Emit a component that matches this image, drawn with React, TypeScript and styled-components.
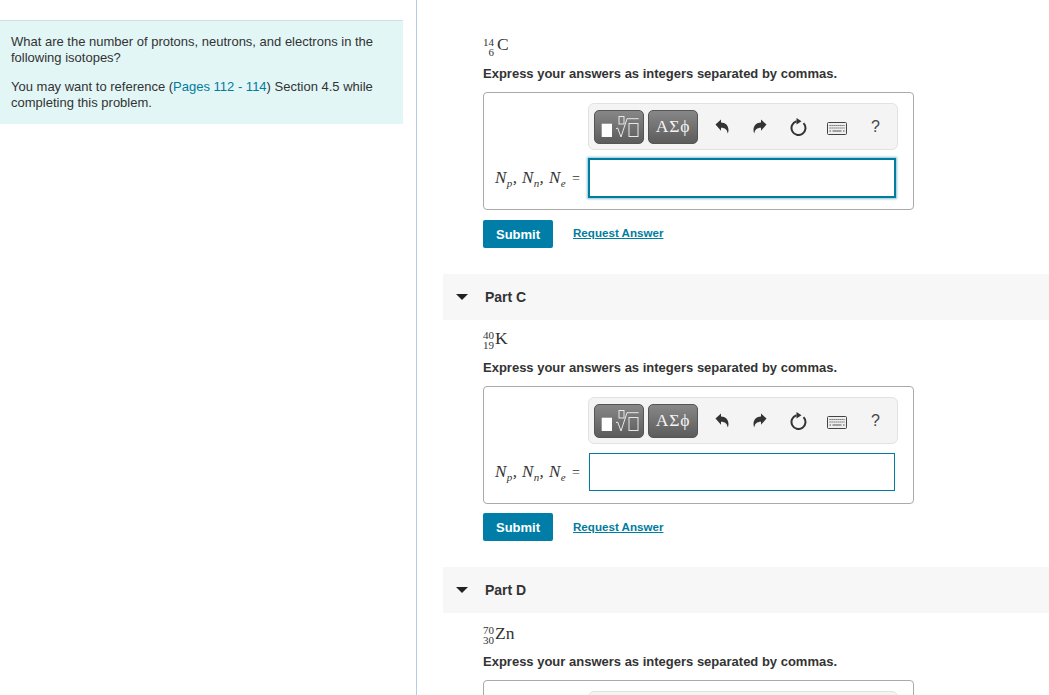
import React from "react";
import styled, { createGlobalStyle } from "styled-components";

const Global = createGlobalStyle`
  html, body { margin: 0; padding: 0; background: #fff; height: 695px; overflow: hidden; }
  body { font-family: "Liberation Sans", Arial, sans-serif; color: #333; font-size: 13px; }
  #root { height: 695px; overflow: hidden; }
`;

const Page = styled.div`
  display: flex;
  width: 1049px;
  height: 695px;
  overflow: hidden;
`;
const Left = styled.aside`
  width: 416px;
  flex: none;
  box-sizing: content-box;
  border-right: 1px solid #b5cde2;
  padding-top: 20px;
`;
const Intro = styled.div`
  width: 403px;
  height: 104px;
  box-sizing: border-box;
  background: #e2f6f6;
  border-top: 1px solid #d3dfe4;
  padding: 13px 11px 0;
  font-size: 13px;
  line-height: 16px;
  color: #333;
`;
const IntroP = styled.p`
  margin: 0 0 13px;
  width: 375px;
`;
const RefLink = styled.a`
  color: #007c9e;
`;
const Right = styled.main`
  flex: 1;
  min-width: 0;
  padding-left: 26px;
`;
const Content = styled.div`
  padding-left: 40px;
`;
const PartHeader = styled.div`
  height: 46px;
  margin-top: 26px;
  background: #f7f7f7;
  display: flex;
  align-items: center;
  font-size: 14px;
  font-weight: 700;
  color: #333;
`;
const Caret = styled.span`
  width: 0;
  height: 0;
  margin-left: 13px;
  margin-right: 17px;
  border-left: 6px solid transparent;
  border-right: 6px solid transparent;
  border-top: 6px solid #222;
`;
const Isotope = styled.div<{ $top: number }>`
  display: flex;
  align-items: center;
  height: 22px;
  margin-top: ${(p) => p.$top}px;
  font-family: "Liberation Serif", serif;
  font-size: 17.5px;
  color: #333;
`;
const Scripts = styled.span<{ $gap: number; $drop: number }>`
  display: inline-flex;
  flex-direction: column;
  align-items: flex-end;
  width: 11px;
  font-size: 11px;
  line-height: 10px;
  margin-right: ${(p) => p.$gap}px;
  margin-top: ${(p) => p.$drop}px;
`;
const Instruction = styled.div<{ $top?: number }>`
  margin-top: ${(p) => p.$top ?? 11}px;
  font-size: 13px;
  line-height: 16px;
  font-weight: 700;
  color: #333;
`;
const AnswerBox = styled.div`
  margin-top: 10px;
  width: 431px;
  height: 118px;
  box-sizing: border-box;
  border: 1px solid #aaa;
  border-radius: 4px;
  padding: 10px 15px 0 104px;
  background: #fff;
`;
const Toolbar = styled.div`
  height: 47px;
  width: 310px;
  box-sizing: border-box;
  background: #f4f4f4;
  border: 1px solid #e2e2e2;
  border-radius: 6px;
  display: flex;
  align-items: center;
  padding-left: 5px;
`;
const TemplateButton = styled.div`
  width: 50px;
  height: 34px;
  flex: none;
  box-sizing: border-box;
  margin-right: 4px;
  border-radius: 5px;
  border: 1px solid #555;
  background: linear-gradient(#878787, #5c5c5c);
  color: #f4f4f4;
  display: flex;
  align-items: center;
  justify-content: center;
  font-family: "Liberation Serif", serif;
  font-size: 17.5px;
  letter-spacing: 0.9px;
`;
const ToolIcon = styled.div`
  width: 38.3px;
  flex: none;
  display: flex;
  align-items: center;
  justify-content: center;
  color: #333;
`;
const Actions = styled.div`
  display: flex;
  align-items: center;
  margin-left: 1px;
`;
const HelpMark = styled.span`
  font-size: 16px;
  color: #444;
`;
const InputRow = styled.div`
  display: flex;
  align-items: center;
  height: 40px;
  margin-top: 8px;
  margin-left: -93px;
`;
const MathLabel = styled.div`
  width: 93px;
  flex: none;
  box-sizing: border-box;
  font-family: "Liberation Serif", serif;
  font-style: italic;
  font-size: 17px;
  letter-spacing: 0.4px;
  color: #333;
  white-space: nowrap;
`;
const Sub = styled.sub`
  font-size: 11px;
  line-height: 0;
`;
const Equals = styled.span`
  font-style: normal;
  font-size: 14px;
  margin-left: 6px;
`;
const AnswerInput = styled.div<{ $focused?: boolean }>`
  width: ${(p) => (p.$focused ? 308 : 306)}px;
  height: ${(p) => (p.$focused ? 40 : 38)}px;
  margin-left: ${(p) => (p.$focused ? 0 : 1)}px;
  box-sizing: border-box;
  background: #fff;
  border: ${(p) => (p.$focused ? 2 : 1)}px solid #007c9e;
  box-shadow: ${(p) => (p.$focused ? "0 0 2px 1px rgba(0,124,158,.45)" : "none")};
`;
const SubmitRow = styled.div<{ $top: number }>`
  display: flex;
  align-items: center;
  margin-top: ${(p) => p.$top}px;
  height: 28px;
`;
const SubmitButton = styled.button`
  width: 70px;
  height: 28px;
  padding: 0;
  border: 0;
  border-radius: 2px;
  background: #007ea8;
  color: #fff;
  font-family: "Liberation Sans", Arial, sans-serif;
  font-size: 13px;
  font-weight: 700;
`;
const RequestLink = styled.a<{ $lift: number }>`
  margin-left: 20px;
  margin-top: -${(p) => p.$lift}px;
  color: #007c9e;
  font-size: 11.6px;
  font-weight: 700;
  text-decoration: underline;
`;

const TemplateIcon = () => (
  <svg width="40" height="26" viewBox="0 0 40 26" fill="none">
    <rect x="2.700" y="9.700" width="10.300" height="13.300" fill="#fff" />
    <rect x="20" y="2.500" width="5" height="7.500" stroke="#e8e8e8" strokeWidth="1" />
    <path d="M17 14.700l1.700-.7 3.300 9L28 4.700h11.700" stroke="#e8e8e8" strokeWidth="1" />
    <rect x="30" y="9.500" width="9" height="13" stroke="#e8e8e8" strokeWidth="1" />
  </svg>
);
const Undo = () => (
  <svg width="14" height="15" viewBox="0 0 14 15" fill="#333">
    <path d="M0.500 5.500 6 0.500v3c4.500 0 7.500 3 7.500 7.500 0 1.400-.3 2.600-.8 3.500-.4-3.600-2.600-5.700-6.700-5.700v3z" />
  </svg>
);
const Redo = () => (
  <svg width="14" height="15" viewBox="0 0 14 15" fill="#333">
    <path d="M13.500 5.500 8 0.500v3C3.500 3.500.5 6.500.5 11c0 1.400.3 2.600.8 3.500C1.700 10.900 3.900 8.800 8 8.800v3z" />
  </svg>
);
const Reset = () => (
  <svg width="17" height="18" viewBox="0 0 17 18" fill="none">
    <path d="M13.500 5.100A7 7 0 1 1 6.500 3.300" stroke="#333" strokeWidth="2" />
    <path d="M6.500 0 11.500 3.300 6.500 6.600z" fill="#333" />
  </svg>
);
const Keyboard = () => (
  <svg width="20" height="16" viewBox="0 0 20 16" fill="none">
    <rect x="0.500" y="3.500" width="19" height="12" rx="1" fill="#eee" stroke="#444" />
    <path d="M2.500 6.500h15M2.500 9h15" stroke="#555" strokeWidth="1.200" strokeDasharray="1.200 0.800" />
    <path d="M2.500 12h1.500M5.500 12h9M16 12h1.500" stroke="#555" strokeWidth="1.200" />
  </svg>
);

const Answer = ({ focused, submitTop, lift }: { focused?: boolean; submitTop: number; lift: number }) => (
  <>
    <AnswerBox>
      <Toolbar>
        <TemplateButton><TemplateIcon /></TemplateButton>
        <TemplateButton>ΑΣϕ</TemplateButton>
        <Actions>
          <ToolIcon><Undo /></ToolIcon>
          <ToolIcon><Redo /></ToolIcon>
          <ToolIcon><Reset /></ToolIcon>
          <ToolIcon><Keyboard /></ToolIcon>
          <ToolIcon><HelpMark>?</HelpMark></ToolIcon>
        </Actions>
      </Toolbar>
      <InputRow>
        <MathLabel>
          N<Sub>p</Sub>, N<Sub>n</Sub>, N<Sub>e</Sub><Equals>=</Equals>
        </MathLabel>
        <AnswerInput $focused={focused} />
      </InputRow>
    </AnswerBox>
    <SubmitRow $top={submitTop}>
      <SubmitButton>Submit</SubmitButton>
      <RequestLink href="#" $lift={lift}>Request Answer</RequestLink>
    </SubmitRow>
  </>
);

const Iso = ({ a, z, s, top, gap, drop }: { a: string; z: string; s: string; top: number; gap: number; drop: number }) => (
  <Isotope $top={top}>
    <Scripts $gap={gap} $drop={drop}><span>{a}</span><span>{z}</span></Scripts>
    {s}
  </Isotope>
);

export default function App() {
  return (
    <Page>
      <Global />
      <Left>
        <Intro>
          <IntroP>What are the number of protons, neutrons, and electrons in the following isotopes?</IntroP>
          <IntroP>
            You may want to reference (<RefLink>Pages 112 - 114</RefLink>) Section 4.5 while completing this problem.
          </IntroP>
        </Intro>
      </Left>
      <Right>
        <Content>
          <Iso a="14" z="6" s="C" top={33} gap={3} drop={6} />
          <Instruction>Express your answers as integers separated by commas.</Instruction>
          <Answer focused submitTop={10} lift={4} />
        </Content>
        <PartHeader><Caret />Part C</PartHeader>
        <Content>
          <Iso a="40" z="19" s="K" top={7} gap={1} drop={3} />
          <Instruction>Express your answers as integers separated by commas.</Instruction>
          <Answer submitTop={9} lift={2} />
        </Content>
        <PartHeader><Caret />Part D</PartHeader>
        <Content>
          <Iso a="70" z="30" s="Zn" top={9} gap={1} drop={3} />
          <Instruction $top={10}>Express your answers as integers separated by commas.</Instruction>
          <AnswerBox><Toolbar /></AnswerBox>
        </Content>
      </Right>
    </Page>
  );
}
